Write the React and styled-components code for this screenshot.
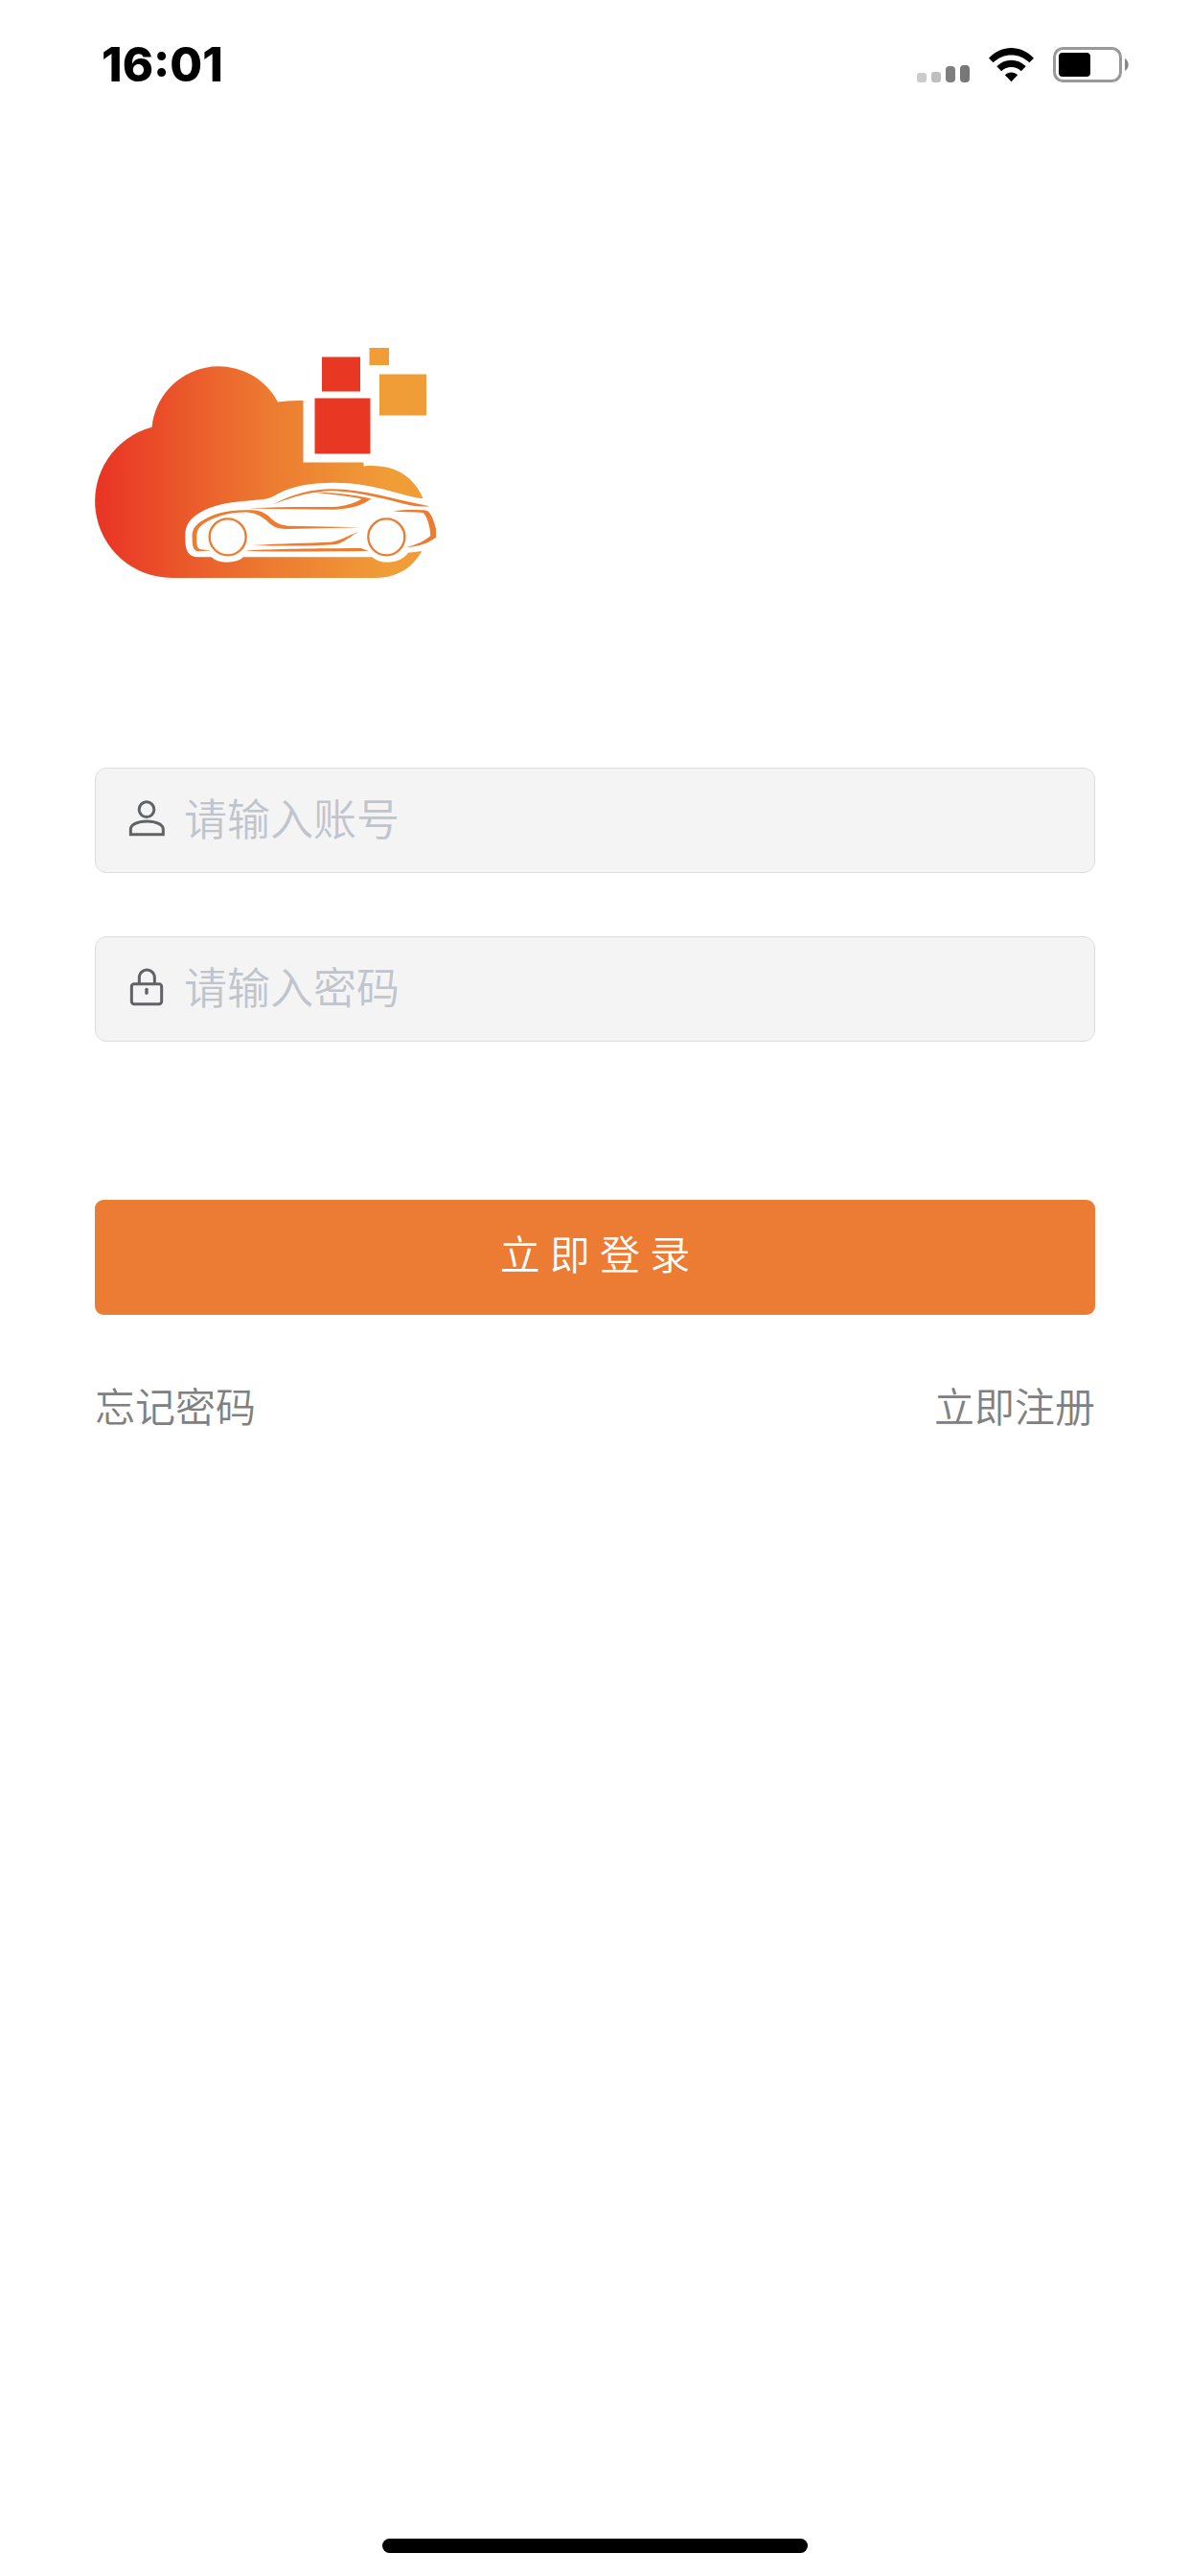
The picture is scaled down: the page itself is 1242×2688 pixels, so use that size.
import React, { useState } from "react";
import styled, { createGlobalStyle } from "styled-components";

const GlobalStyle = createGlobalStyle`
  * {
    box-sizing: border-box;
  }

  body {
    margin: 0;
    background: #ffffff;
    font-family: Roboto, "Noto Sans CJK SC", sans-serif;
    font-weight: 350;
  }
`;

const Page = styled.div`
  min-height: 100vh;
  display: flex;
  flex-direction: column;
`;

const StatusBar = styled.header`
  height: 136px;
  padding: 0 64px 0 106px;
  display: flex;
  align-items: center;
  justify-content: space-between;
`;

const Time = styled.time`
  font-family: Inter, sans-serif;
  font-size: 49px;
  font-weight: 800;
  line-height: 56px;
  color: #000000;
`;

const StatusIcons = styled.div`
  display: flex;
  align-items: center;
  gap: 20px;
`;

const Main = styled.main`
  padding: 227px 99px 0;
`;

const Logo = styled.svg`
  display: block;
  width: 356px;
  height: 240px;
`;

const Form = styled.form`
  margin-top: 198px;
  display: flex;
  flex-direction: column;
`;

const Fields = styled.div`
  display: flex;
  flex-direction: column;
  gap: 66px;
`;

const Field = styled.label`
  height: 110px;
  padding: 0 34px;
  display: flex;
  align-items: center;
  gap: 20px;
  border: 1px solid #dcdcdc;
  border-radius: 12px;
  background: #f4f4f4;
`;

const FieldIcon = styled.svg`
  flex: none;
  width: 38px;
  height: 44px;
  fill: none;
  stroke: #606266;
  stroke-width: 9;
`;

const Input = styled.input`
  flex: 1;
  min-width: 0;
  height: 100%;
  padding: 0;
  border: 0;
  outline: 0;
  background: transparent;
  font-family: inherit;
  font-size: 45px;
  font-weight: inherit;
  color: #303133;

  &::placeholder {
    color: #c0c4cc;
    opacity: 1;
  }
`;

const SubmitButton = styled.button`
  height: 120px;
  margin-top: 165px;
  padding: 0 0 12px;
  border: 0;
  border-radius: 9px;
  background: #ec7b34;
  font-family: inherit;
  font-size: 42px;
  font-weight: inherit;
  color: #ffffff;
  cursor: pointer;
`;

const Links = styled.nav`
  margin-top: 68px;
  display: flex;
  justify-content: space-between;
`;

const Link = styled.a`
  font-size: 42px;
  line-height: 60px;
  color: #808080;
  text-decoration: none;
`;

const HomeIndicator = styled.div`
  width: 444px;
  height: 15px;
  margin: auto auto 24px;
  border-radius: 8px;
  background: #000000;
`;

function Signal() {
  return (
    <svg width="55" height="38" viewBox="0 0 55 38">
      <rect x="0" y="27" width="10" height="10" rx="3" fill="#cbcbcb" />
      <rect x="15" y="26" width="10" height="11" rx="3" fill="#bfbfbf" />
      <rect x="30" y="20" width="10" height="17" rx="4" fill="#7f7f7f" />
      <rect x="45" y="19" width="10" height="18" rx="4" fill="#777777" />
    </svg>
  );
}

function Wifi() {
  return (
    <svg width="47" height="38" viewBox="0 0 142 114">
      <path d="M0 35C40-8 102-8 142 35L128 49C96 17 46 17 14 49Z" />
      <path d="M25 61C51 35 91 35 117 61L102 76C84 59 58 59 40 76Z" />
      <path d="M51 88C63 77 79 77 91 88L71 109Z" />
    </svg>
  );
}

function Battery() {
  return (
    <svg width="79" height="38" viewBox="0 0 79 38">
      <rect
        x="1.5"
        y="1.5"
        width="69"
        height="34"
        rx="9"
        fill="none"
        stroke="#999999"
        strokeWidth="3"
      />
      <rect x="6" y="6" width="33" height="25" rx="4" />
      <path d="M75 12C80 15 80 22 75 25Z" fill="#888888" />
    </svg>
  );
}

function CloudCarLogo() {
  return (
    <Logo viewBox="99 363 356 240" role="img" aria-label="logo">
      <defs>
        <linearGradient
          id="cloud"
          gradientUnits="userSpaceOnUse"
          x1="99"
          y1="0"
          x2="448"
          y2="0"
        >
          <stop offset="0.03" stopColor="#e93725" />
          <stop offset="0.5" stopColor="#ec7830" />
          <stop offset="0.88" stopColor="#f09d38" />
        </linearGradient>
      </defs>
      <path
        fill="url(#cloud)"
        d="M179 603A80 80 0 0 1 158.500 445.700A70 70 0 0 1 290 419.500Q301 417.500 316.500 418V482.500H379.500V486.500C412 483 434 498 443 524V570C433 591 416 603 392 603Z"
      />
      <g fill="#e83823">
        <rect x="336" y="372.500" width="40" height="36" />
        <rect x="328.500" y="415.500" width="58" height="58" />
      </g>
      <g fill="#f09d38">
        <rect x="385.500" y="363" width="20.500" height="18" />
        <rect x="396" y="390.500" width="49" height="43" />
      </g>
      <g transform="translate(180 490) scale(0.33333)">
        <path
          fill="#ffffff"
          d="M40 215C38 180 50 160 75 142C110 117 150 107 200 101L290 92C305 91 315 84 330 76C380 50 430 42 500 41C580 40 640 56 700 72C740 83 770 90 787 91H840V256H777L738 260C728 276 705 290 670 290C650 290 635 283 625 274H222C210 285 195 290 170 290C145 290 135 285 122 274H80C50 273 40 255 40 215Z"
        />
        <g fill="#ed7b30">
          <path d="M62 218C60 195 65 181 85 165C130 135 180 124 250 127C270 128 285 133 300 145C320 163 330 173 360 176L590 181L360 186C325 187 310 175 295 160C280 147 262 136 240 134C190 131 140 142 96 170C79 183 75 195 76 220C76 238 78 247 88 250L122 253L85 256C68 256 62 245 62 218Z" />
          <path d="M240 121C330 116 420 117 500 117C545 114 565 106 592 92C560 84 510 79 425 70C500 72 560 77 622 91C600 110 560 124 505 125C420 125 330 124 240 121Z" />
          <path d="M313 110C380 75 440 61 500 61C600 62 700 95 805 115C780 117 755 114 725 107C640 86 570 68 500 67C440 68 385 82 313 110Z" />
          <path d="M690 130C720 126 765 125 795 128C810 131 820 165 827 193L825 212C800 231 770 241 732 243C765 235 793 222 808 207C807 185 800 150 785 135C755 133 720 134 690 130Z" />
          <path d="M248 237C340 231 430 230 495 227C525 223 548 207 584 194C560 206 535 230 508 235C430 240 340 239 248 237Z" />
          <path d="M228 254C300 249 400 247 590 246L614 255C500 256 350 258 228 254Z" />
        </g>
        <g fill="#ffffff" stroke="#ed7b30" strokeWidth="7">
          <circle cx="173" cy="211" r="57" />
          <circle cx="670" cy="211" r="57" />
        </g>
      </g>
    </Logo>
  );
}

function UserIcon() {
  return (
    <FieldIcon viewBox="132 132 114 132" aria-hidden="true">
      <circle cx="189" cy="164" r="23.500" />
      <path d="M139 242V226C139 212 160 201 190 201C220 201 241 212 241 226V242Z" />
    </FieldIcon>
  );
}

function LockIcon() {
  return (
    <FieldIcon viewBox="132 135 114 132" aria-hidden="true">
      <rect x="142" y="185" width="94" height="63" rx="8" />
      <path d="M166 184V165A24 24 0 0 1 214 165V184" />
      <path d="M189 202V214" strokeWidth="10" strokeLinecap="round" />
    </FieldIcon>
  );
}

export default function App() {
  const [account, setAccount] = useState("");
  const [password, setPassword] = useState("");

  return (
    <Page>
      <GlobalStyle />
      <StatusBar>
        <Time>16:01</Time>
        <StatusIcons>
          <Signal />
          <Wifi />
          <Battery />
        </StatusIcons>
      </StatusBar>
      <Main>
        <CloudCarLogo />
        <Form onSubmit={e => e.preventDefault()}>
          <Fields>
            <Field htmlFor="account">
              <UserIcon />
              <Input
                id="account"
                type="text"
                aria-label="账号"
                placeholder="请输入账号"
                value={account}
                onChange={e => setAccount(e.target.value)}
              />
            </Field>
            <Field htmlFor="password">
              <LockIcon />
              <Input
                id="password"
                type="password"
                aria-label="密码"
                placeholder="请输入密码"
                value={password}
                onChange={e => setPassword(e.target.value)}
              />
            </Field>
          </Fields>
          <SubmitButton type="submit">立 即 登 录</SubmitButton>
        </Form>
        <Links>
          <Link href="#forgot">忘记密码</Link>
          <Link href="#register">立即注册</Link>
        </Links>
      </Main>
      <HomeIndicator />
    </Page>
  );
}
